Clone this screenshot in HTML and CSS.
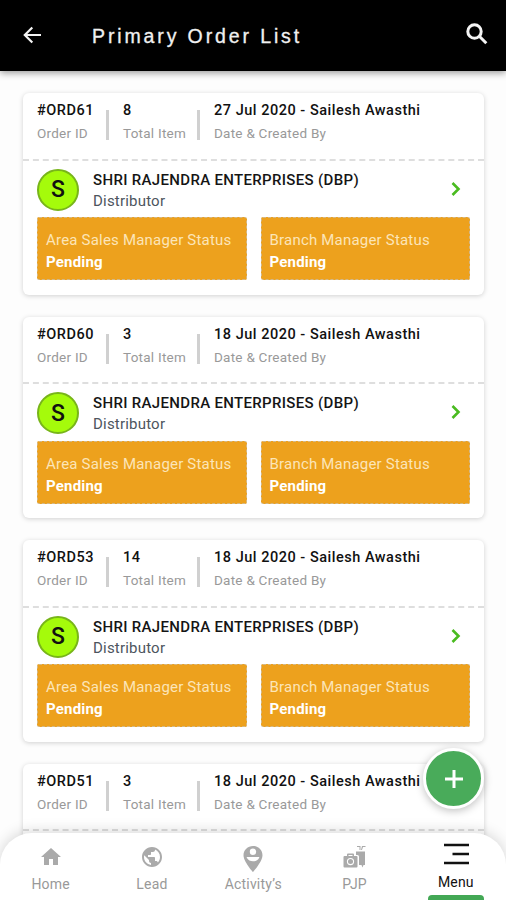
FILE: index.html
```html
<!DOCTYPE html>
<html lang="en">
<head>
<meta charset="utf-8">
<title>Primary Order List</title>
<link rel="stylesheet" href="styles.css">
</head>
<body>
<div class="app">
  <header class="topbar">
    <svg class="back" viewBox="0 0 18 18"><path d="M18 9H2M9.3 1.500 1.800 9l7.500 7.500"/></svg>
    <h1>Primary Order List</h1>
    <svg class="search" viewBox="0 0 22 22"><circle cx="8.500" cy="8.500" r="6.700"/><path d="m13.300 13.300 7 7"/></svg>
  </header>
  <main class="orders" id="orders"></main>
  <button class="fab" aria-label="Add order"><svg viewBox="0 0 20 20"><path d="M10 1v18M1 10h18"/></svg></button>
  <nav class="tabs">
    <a class="tab"><svg viewBox="0 0 24 24"><path d="M10 20v-6h4v6h5v-8h3L12 3 2 12h3v8z"/></svg><span>Home</span></a>
    <a class="tab"><svg viewBox="0 0 24 24"><path d="M12 2C6.480 2 2 6.480 2 12s4.480 10 10 10 10-4.480 10-10S17.520 2 12 2zm-1 17.930c-3.950-.49-7-3.850-7-7.930 0-.62.080-1.210.21-1.790L9 15v1c0 1.100.9 2 2 2v1.930zm6.900-2.540c-.26-.81-1-1.390-1.900-1.390h-1v-3c0-.55-.45-1-1-1H8v-2h2c.55 0 1-.45 1-1V7h2c1.100 0 2-.9 2-2v-.41c2.930 1.190 5 4.060 5 7.410 0 2.080-.8 3.970-2.100 5.390z"/></svg><span>Lead</span></a>
    <a class="tab"><svg class="pin" viewBox="0 0 20 26"><path fill-rule="evenodd" d="M10 0C4.700 0 .5 4 .5 9.200.5 15.500 10 26 10 26s9.500-10.500 9.500-16.800C19.500 4 15.300 0 10 0zm0 2.600a3.200 3.200 0 1 1 0 6.400A3.200 3.200 0 0 1 10 2.600zM4 11h12c.3 0 .3.400.2.700-1.200 2.400-3.600 3.600-6.200 3.600s-5-1.200-6.200-3.600c-.1-.3-.1-.7.2-.7z"/></svg><span>Activity’s</span></a>
    <a class="tab"><svg class="trip" viewBox="0 0 24 24"><path fill-rule="evenodd" d="M1.500 11H4V9.500Q4 8.500 5 8.500h5q1 0 1 1V11h2.500q1 0 1 1v9.500q0 1-1 1h-12q-1 0-1-1V12q0-1 1-1zM5.500 11h4v-1h-4zM7.500 13a3.600 3.600 0 1 0 0 7.200 3.600 3.600 0 0 0 0-7.200zm0 1.100a2.500 2.500 0 1 1 0 5 2.500 2.500 0 0 1 0-5z"/><path d="M5.500 16h4v1.200h-4zM13 6.500h9V20h-1.500l-1 2.500-1-2.500H16v-8.500q0-1.500-1.500-1.500H13zM14 1h3.500v4h-1V2H14zM19 1h3.500v1H20l-1 3h-1z"/></svg><span>PJP</span></a>
    <a class="tab active"><svg class="lines" viewBox="0 0 26 22"><path d="M1 2h25M9.500 11H26M1 20h25"/></svg><span>Menu</span></a>
  </nav>
</div>
<template id="order">
  <article class="card">
    <div class="summary">
      <div class="cell"><b class="id"></b><small>Order ID</small></div>
      <div class="cell"><b class="count"></b><small>Total Item</small></div>
      <div class="cell"><b class="date"></b><small class="by">Date &amp; Created By</small></div>
    </div>
  </article>
</template>
<template id="details">
  <div class="party">
    <div class="avatar">S</div>
    <div class="who"><strong>SHRI RAJENDRA ENTERPRISES (DBP)</strong><span>Distributor</span></div>
    <svg class="chevron" viewBox="0 0 10 16"><path d="m1.500 2 6 6-6 6"/></svg>
  </div>
  <div class="statuses">
    <div class="status"><span>Area Sales Manager Status</span><b>Pending</b></div>
    <div class="status"><span>Branch Manager Status</span><b>Pending</b></div>
  </div>
</template>
<script src="app.js"></script>
</body>
</html>
```
FILE: styles.css
```css
* { box-sizing: border-box; }
body { margin: 0; background: #fdfdfd; font-family: Roboto, "Liberation Sans", sans-serif; }
.app { position: relative; width: 506px; height: 900px; overflow: hidden; display: flex; flex-direction: column; }
.topbar { height: 71px; flex: none; background: #000; display: flex; align-items: center; padding: 0 18px 0 23px; box-shadow: 0 2px 7px rgba(0,0,0,.4); z-index: 1; }
.topbar svg { fill: none; stroke: #f4f4f4; }
.back { width: 18px; height: 18px; stroke-width: 2.200; margin-top: -2px; }
.search { width: 22px; height: 22px; stroke-width: 3; margin: -3px 0 0 auto; }
h1 { margin: 1px 0 0 51px; font: 400 19.500px "Liberation Sans", sans-serif; letter-spacing: 2.880px; color: #f0f0f0; -webkit-text-stroke: .3px #f0f0f0; white-space: nowrap; }
.orders { padding: 22px 22px 0 23px; display: flex; flex-direction: column; gap: 22px; }
.card { flex: none; height: 201.600px; background: #fff; border-radius: 6px; box-shadow: 0 1px 5px rgba(0,0,0,.18); }
.summary { height: 67.500px; display: flex; padding: 8px 14px 0; border-bottom: 2px dashed #dedede; }
.cell { display: flex; flex-direction: column; position: relative; white-space: nowrap; }
.cell:nth-child(1) { width: 86px; }
.cell:nth-child(2) { width: 91px; }
.cell + .cell::before { content: ""; position: absolute; left: -17px; top: 9px; width: 3px; height: 30px; background: #d0d0d0; }
.cell b { font-size: 14.500px; line-height: 20px; font-weight: 500; color: #111; letter-spacing: .52px; }
.cell small { font-size: 13.500px; line-height: 20px; margin-top: 2px; color: #999; letter-spacing: .25px; }
.party { display: flex; height: 56.500px; padding: 8px 23px 0 14px; }
.avatar { width: 42px; height: 42px; border-radius: 50%; background: #a5fb0b; border: 2px solid #78b51a; display: flex; align-items: center; justify-content: center; font-size: 23px; font-weight: 500; color: #111; }
.who { margin-left: 14px; display: flex; flex-direction: column; padding-top: 1px; white-space: nowrap; }
.who strong { font-size: 15px; line-height: 21px; font-weight: 500; color: #151515; letter-spacing: .33px; }
.who span { font-size: 15px; line-height: 21px; color: #4d555e; letter-spacing: .2px; }
.chevron { width: 10px; height: 16px; margin: 12px 0 0 auto; fill: none; stroke: #4abb20; stroke-width: 2.600; }
.statuses { display: grid; grid-template-columns: 1fr 1fr; gap: 14px; padding: 0 14px; }
.status { height: 63px; background: #eda11d; border: 1px dashed #d3b887; border-radius: 2px; padding: 11px 8px; display: flex; flex-direction: column; white-space: nowrap; }
.status span { font-size: 15px; line-height: 22px; color: #fce5b8; letter-spacing: .2px; }
.status b { font-size: 15px; line-height: 22px; font-weight: 700; color: #fff; letter-spacing: .2px; }
.tabs { position: absolute; left: 0; right: 0; bottom: 0; height: 67px; background: #fff; border-radius: 32px 32px 0 0; box-shadow: 0 -2px 14px rgba(0,0,0,.15); display: grid; grid-template-columns: repeat(5, 101.300px); }
.tab { display: flex; flex-direction: column; align-items: center; padding-top: 12px; color: #999; font-size: 14px; line-height: 18px; letter-spacing: .2px; }
.tab svg { width: 24px; height: 24px; fill: #aaa; margin-bottom: 6px; }
.tab svg.pin { width: 20px; height: 26px; margin: 1px 0 3px; }
.tab svg.lines { width: 26px; height: 22px; fill: none; stroke: #111; stroke-width: 2.700; margin: -2px 0 8px; }
.tab.active { color: #111; }
.tab.active::after { content: ""; width: 56px; height: 5px; background: #43a855; border-radius: 4px 4px 0 0; margin-top: auto; }
.fab { position: absolute; left: 423px; top: 748px; width: 61px; height: 61px; border: 3px solid #fff; border-radius: 50%; background: #49ab5a; padding: 0; box-shadow: 0 2px 9px rgba(0,0,0,.25); display: flex; align-items: center; justify-content: center; }
.fab svg { width: 20px; height: 20px; stroke: #fff; stroke-width: 3; }
```
FILE: app.js
```js
const orders = [
  { id: "#ORD61", count: "8", date: "27 Jul 2020 - Sailesh Awasthi", details: true },
  { id: "#ORD60", count: "3", date: "18 Jul 2020 - Sailesh Awasthi", details: true },
  { id: "#ORD53", count: "14", date: "18 Jul 2020 - Sailesh Awasthi", details: true },
  { id: "#ORD51", count: "3", date: "18 Jul 2020 - Sailesh Awasthi", details: false }
];
const list = document.getElementById("orders");
const template = document.getElementById("order");
const details = document.getElementById("details");
for (const order of orders) {
  const card = template.content.cloneNode(true);
  for (const key of ["id", "count", "date"]) {
    card.querySelector("." + key).textContent = order[key];
  }
  if (order.details) {
    card.querySelector(".card").append(details.content.cloneNode(true));
  }
  list.append(card);
}
```
